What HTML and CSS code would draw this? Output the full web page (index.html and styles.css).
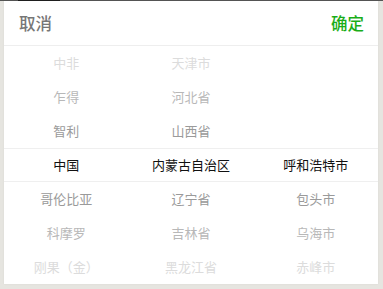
FILE: index.html
```html
<!DOCTYPE html>
<html lang="zh-CN">
<head>
<meta charset="utf-8">
<title>Picker</title>
<link rel="stylesheet" href="styles.css">
</head>
<body>
<div class="topbar"><span class="topbar-dark"></span></div>
<div class="page">
  <div class="panel">
    <div class="header">
      <span class="btn cancel">取消</span>
      <span class="btn confirm">确定</span>
    </div>
    <div class="picker">
      <div class="col">
        <div class="row d3">中非</div>
        <div class="row d2">乍得</div>
        <div class="row d1">智利</div>
        <div class="row sel">中国</div>
        <div class="row d1">哥伦比亚</div>
        <div class="row d2">科摩罗</div>
        <div class="row d3">刚果（金）</div>
      </div>
      <div class="col">
        <div class="row d3">天津市</div>
        <div class="row d2">河北省</div>
        <div class="row d1">山西省</div>
        <div class="row sel">内蒙古自治区</div>
        <div class="row d1">辽宁省</div>
        <div class="row d2">吉林省</div>
        <div class="row d3">黑龙江省</div>
      </div>
      <div class="col">
        <div class="row"></div>
        <div class="row"></div>
        <div class="row"></div>
        <div class="row sel">呼和浩特市</div>
        <div class="row d1">包头市</div>
        <div class="row d2">乌海市</div>
        <div class="row d3">赤峰市</div>
      </div>
      <div class="band"></div>
    </div>
  </div>
</div>
</body>
</html>
```
FILE: styles.css
```css
html, body {
  margin: 0;
  padding: 0;
  background: #e6e5e0;
  font-family: "Noto Sans CJK SC", "Noto Sans", sans-serif;
}
.topbar {
  height: 1px;
  background: #555555;
  display: flex;
}
.topbar-dark {
  margin-left: 18px;
  width: 42px;
  background: #1e1e1e;
}
.page {
  padding: 0 5px 5px 4px;
}
.panel {
  background: #ffffff;
  height: 283px;
  box-shadow: 0 0 2px rgba(0,0,0,0.06);
}
.header {
  height: 44px;
  border-bottom: 1px solid #eeeeee;
  display: flex;
  justify-content: space-between;
  align-items: center;
  padding: 0 14px 0 15px;
}
.btn {
  font-size: 16.5px;
  line-height: 20px;
  font-weight: 500;
}
.cancel { color: #777777; }
.confirm { color: #1aad19; }
.picker {
  position: relative;
  display: grid;
  grid-template-columns: 1fr 1fr 1fr;
}
.col {
  display: flex;
  flex-direction: column;
}
.row {
  height: 34px;
  display: flex;
  align-items: center;
  justify-content: center;
  font-size: 13px;
  line-height: 16px;
  padding-bottom: 1px;
  box-sizing: border-box;
  color: #000;
  white-space: nowrap;
}
.row.sel { color: #111111; }
.row.d1 { color: #9a9a9a; }
.row.d2 { color: #b8b8b8; }
.row.d3 { color: #dcdcdc; }
.band {
  position: absolute;
  left: 0;
  right: 0;
  top: 102px;
  height: 34px;
  box-sizing: border-box;
  border-top: 1px solid #efefef;
  border-bottom: 1px solid #efefef;
  pointer-events: none;
}
```
